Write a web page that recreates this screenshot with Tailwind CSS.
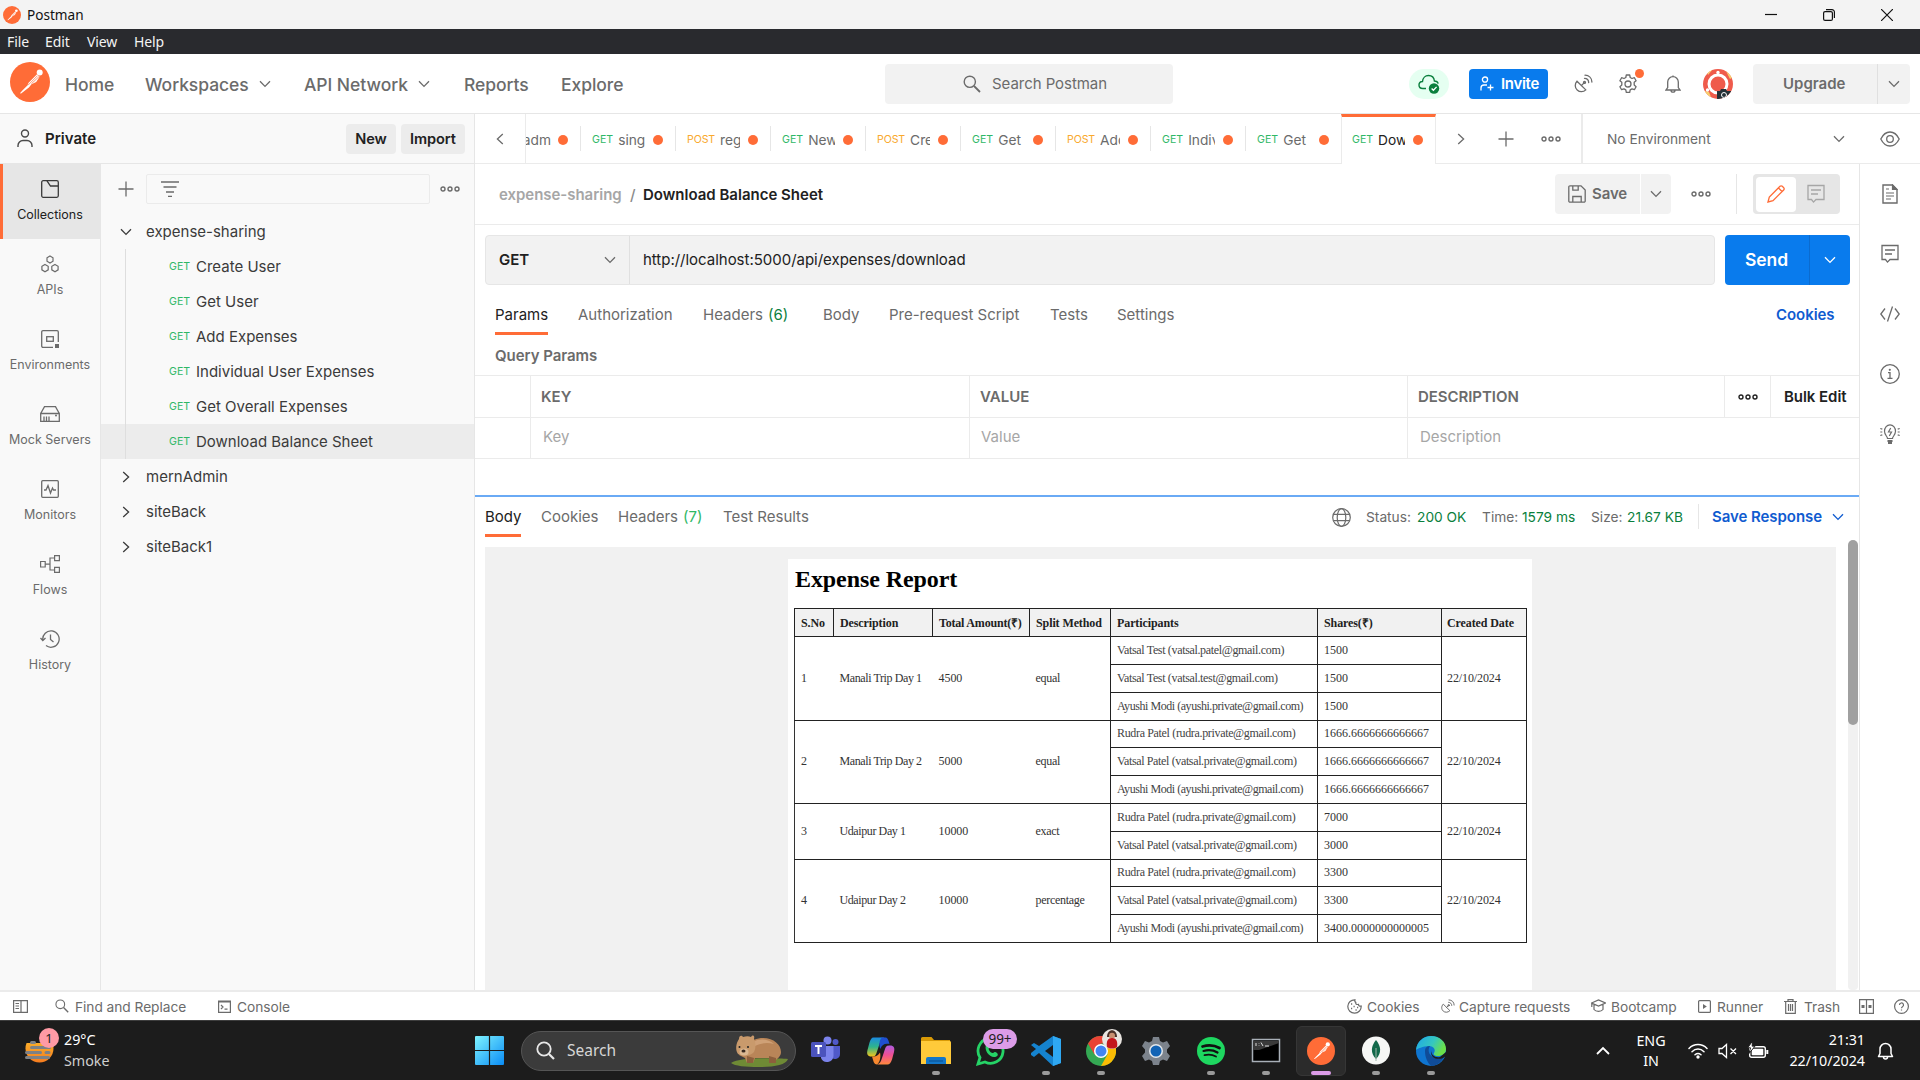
<!DOCTYPE html>
<html lang="en">
<head>
<meta charset="utf-8">
<title>Postman</title>
<script src="https://cdn.jsdelivr.net/npm/@tailwindcss/browser@4"></script>
</head>
<body class="w-[1920px] h-[1080px] overflow-hidden bg-white font-['Inter',sans-serif] text-[15px] leading-5 text-[#6b6b6b] whitespace-nowrap flex flex-col">

<!-- shared icons -->
<svg class="hidden">
  <symbol id="down" viewBox="0 0 12 8"><path d="M1 1.2 6 6.4 11 1.2" fill="none" stroke="currentColor" stroke-width="1.3"/></symbol>
  <symbol id="right" viewBox="0 0 8 12"><path d="M1.2 1 6.6 6 1.2 11" fill="none" stroke="currentColor" stroke-width="1.3"/></symbol>
  <symbol id="dots" viewBox="0 0 20 6"><g fill="none" stroke="currentColor" stroke-width="1.4"><circle cx="3" cy="3" r="2"/><circle cx="10" cy="3" r="2"/><circle cx="17" cy="3" r="2"/></g></symbol>
  <symbol id="plus" viewBox="0 0 16 16"><path d="M8 .5v15M.5 8h15" fill="none" stroke="currentColor" stroke-width="1.3"/></symbol>
  <symbol id="pm" viewBox="0 0 40 40"><circle cx="20" cy="20" r="20" fill="#ff6c37"/><circle cx="29.7" cy="10.6" r="3" fill="#fff"/><path d="M27 12.2 18.6 20.8l-1.2 2.6-4.3 4.3-3.2 3.6 1.2.1 7.8-6 2.6-3.1 4.7-2.4 3.4-5.2z" fill="#fff"/><path d="M27.6 13.6 18 23.2M29 14.6l-7.6 7.2" stroke="#ff6c37" stroke-width=".7"/></symbol>
  <symbol id="sat" viewBox="0 0 20 20"><g fill="none" stroke="currentColor" stroke-width="1.3" stroke-linecap="round"><path d="M4 7.2c-2.4 2.5-2.3 6.5.2 8.8 2.5 2.300 6.200 2.200 8.600-.1zM8.600 11.400l2.600-2.600"/><circle cx="11.500" cy="8.400" r="1"/><path d="M11.500 4.400c2.400.1 4.100 1.800 4.200 4.200M12 1.200c4 .1 6.800 2.900 6.900 6.900"/></g></symbol>
  <symbol id="note" viewBox="0 0 18 20"><g fill="none" stroke="currentColor" stroke-width="1.3"><path d="M1 1.500h16v14H9l-2.500 2.600L4.500 15.500H1z"/><path d="M4 6h10M4 10h7"/></g></symbol>
  <symbol id="find" viewBox="0 0 18 18"><g fill="none" stroke="currentColor"><circle cx="6.800" cy="6.800" r="5.600" stroke-width="1.400"/><path d="m11 11 6 6" stroke-width="1.800"/></g></symbol>
</svg>

<!-- window title -->
<div class="h-[29px] shrink-0 bg-[#f3f3f3] flex items-center pl-[3px] text-[#111] font-['Noto_Sans',sans-serif] text-[13.6px]">
  <svg class="size-[18px] mr-[6px]"><use href="#pm"/></svg>Postman
  <div class="ml-auto flex items-center gap-[46px] pr-[27px]">
    <svg class="w-3 h-3" viewBox="0 0 12 12"><path d="M0 5.500h12" stroke="#111" stroke-width="1.200"/></svg>
    <svg class="w-3 h-3" viewBox="0 0 12 12"><g fill="none" stroke="#111" stroke-width="1.200"><rect x=".6" y="2.600" width="8.800" height="8.800" rx="1.500"/><path d="M3 .7h6a2.400 2.400 0 0 1 2.400 2.400v6"/></g></svg>
    <svg class="w-3 h-3" viewBox="0 0 12 12"><path d="m0 0 12 12M12 0 0 12" stroke="#111" stroke-width="1.200"/></svg>
  </div>
</div>
<div class="h-[25px] shrink-0 bg-[#292a2e] text-[#f3f3f3] font-['Noto_Sans',sans-serif] text-[14px] tracking-[-0.1px] flex items-center pl-[7px]">
  <span class="w-[38px]">File</span><span class="w-[42px]">Edit</span><span class="w-[47px]">View</span><span>Help</span>
</div>

<!-- top navigation -->
<header class="h-[60px] shrink-0 border-b border-[#e6e6e6] flex items-center text-[17.5px] font-medium tracking-[-0.05px]">
  <svg class="size-10 ml-[10px] mr-[15px] mb-1"><use href="#pm"/></svg>
  <span class="w-[80px] pt-[2px]">Home</span>
  <span class="w-[114px] pt-[2px]">Workspaces</span><svg class="w-3 h-2 mr-[33px]"><use href="#down"/></svg>
  <span class="w-[114px] pt-[2px]">API Network</span><svg class="w-3 h-2 mr-[34px]"><use href="#down"/></svg>
  <span class="w-[97px] pt-[2px]">Reports</span>
  <span class="w-[324px] pt-[2px]">Explore</span>
  <div class="w-[288px] h-10 rounded bg-[#f2f2f2] flex items-center pl-[78px] gap-[11px] text-[15px] font-normal"><svg class="size-[18px]"><use href="#find"/></svg><span class="pt-px">Search Postman</span></div>
  <div class="ml-[236px] w-10 h-[30px] rounded-full bg-[#e5fff1] flex items-center justify-center">
    <svg class="w-[22px] h-5" viewBox="0 0 22 20"><path d="M8 14.500H4.800C2.500 14.500 1 13 1 11s1.500-3.400 3.500-3.500C4.800 4 7.300 1.500 10.500 1.500c3.300 0 5.600 2.300 5.900 5.500 1.800.1 3.300 1.100 3.800 2.600" fill="none" stroke="#0a7f3d" stroke-width="1.400"/><circle cx="16" cy="14.500" r="5.200" fill="#0a7f3d"/><path d="m13.600 14.500 1.800 1.800 3.200-3.400" fill="none" stroke="#fff" stroke-width="1.300"/></svg>
  </div>
  <div class="ml-5 w-[79px] h-[30px] rounded bg-[#097bed] text-white flex items-center pl-[11px] gap-[7px] text-[15px] font-semibold tracking-[-0.3px]">
    <svg class="w-[14px] h-4" viewBox="0 0 14 16"><g fill="none" stroke="#fff" stroke-width="1.300"><circle cx="5" cy="3.600" r="2.600"/><path d="M1 14.500V12a3 3 0 0 1 3-3h3M10.500 8.500v6M7.500 11.500h6"/></g></svg>Invite</div>
  <svg class="w-5 h-5 ml-[25px]"><use href="#sat"/></svg>
  <div class="relative ml-[25px]">
    <svg class="size-5" viewBox="0 0 20 20"><g fill="none" stroke="currentColor" stroke-width="1.300" stroke-linejoin="round"><path d="M8.300 1h3.400l.5 2.500 1.800 1 2.400-.8 1.700 3-1.900 1.600v2.800l1.900 1.600-1.700 3-2.400-.8-1.800 1-.5 2.500H8.300l-.5-2.500-1.800-1-2.400.8-1.700-3 1.900-1.600V8.300L1.900 6.700l1.700-3 2.400.8 1.800-1z"/><circle cx="10" cy="10" r="3"/></g></svg>
    <i class="absolute left-[17px] -top-[5px] size-[9px] rounded-full bg-[#ff6c37]"></i>
  </div>
  <svg class="w-4 h-5 ml-[27px]" viewBox="0 0 16 20"><g fill="none" stroke="currentColor" stroke-width="1.300"><path d="M8 1.500v1M1 16h14l-1.700-2.500V8a5.300 5.300 0 0 0-10.600 0v5.500zM6 16.200a2 2 0 0 0 4 0"/></g></svg>
  <svg class="size-[30px] ml-[22px]" viewBox="0 0 30 30"><defs><clipPath id="av"><circle cx="15" cy="15" r="15"/></clipPath></defs><g clip-path="url(#av)"><path fill="#ef5b4c" d="M0 0h30v30H0z"/><path d="M4 3 8 0h2L5 6zM22 0h4l4 8-3 2zM2 22l4 1 2 5-6-2z" fill="#f7cf6b"/><circle cx="15" cy="15" r="9" fill="none" stroke="#fff" stroke-width="3"/><circle cx="15" cy="3.500" r="1.700" fill="#fff"/><circle cx="4.500" cy="21" r="1.700" fill="#fff"/><path d="M14 22h3l1-2h5l1 2h4v10H14z" fill="#263238"/><circle cx="21" cy="26" r="2.500" fill="none" stroke="#fff"/></g></svg>
  <div class="ml-5 w-[157px] h-10 rounded bg-[#f2f2f2] flex text-[15px] font-semibold tracking-normal"><span class="w-[125px] border-r border-[#e0e0e0] leading-10 pl-[30px]">Upgrade</span><span class="flex-1 flex items-center justify-center"><svg class="w-3 h-2"><use href="#down"/></svg></span></div>
</header>

<!-- workspace bar with request tabs -->
<div class="h-[50px] shrink-0 flex">
  <div class="w-[475px] bg-[#f9f9f9] border-r border-b border-[#e6e6e6] flex items-center text-[#212121] font-semibold">
    <svg class="w-4 h-[19px] ml-[17px] mr-3" viewBox="0 0 16 19"><g fill="none" stroke="#4a4a4a" stroke-width="1.400"><circle cx="8" cy="4.500" r="3.500"/><path d="M1 18v-1.500a5 5 0 0 1 5-5h4a5 5 0 0 1 5 5V18"/></g></svg>
    <span class="w-[301px]">Private</span>
    <span class="w-[50px] h-[30px] rounded bg-[#ececec] text-center leading-[30px] mr-[5px] text-[14.6px] tracking-[-0.1px]">New</span><span class="w-16 h-[30px] rounded bg-[#ececec] text-center leading-[30px] text-[14.6px] tracking-[-0.1px]">Import</span>
  </div>
  <div class="w-[51px] border-r border-b border-[#ebebeb] flex items-center justify-center"><svg class="w-2 h-3 rotate-180"><use href="#right"/></svg></div>
  <div class="w-[55px] border-b border-[#ebebeb] flex items-center"><div class="w-full h-[25px] border-r border-[#e6e6e6] flex items-center pt-[2px] text-[13.75px]"><span class="w-[25px] mr-[7px] overflow-hidden flex justify-end">adm</span><i class="size-[10px] rounded-full bg-[#ff6c37]"></i></div></div>
  <div id="tabs" class="flex w-[760px]"></div>
  <div class="w-[95px] border-x border-[#ebebeb] border-t-3 border-t-[#ff6c37] flex items-center pl-[10px] pb-px"><span class="text-[10.6px] text-[#2fb866] w-[26px]">GET</span><span class="text-[13.75px] text-[#212121] w-[27px] overflow-hidden">Down</span><i class="ml-[8px] size-[10px] rounded-full bg-[#ff6c37]"></i></div>
  <div class="w-[147px] border-b border-r-2 border-[#ebebeb] flex items-center pl-[21px]"><svg class="w-2 h-3 mr-[33px]"><use href="#right"/></svg><svg class="size-4 mr-[27px]"><use href="#plus"/></svg><svg class="w-5 h-[6px]"><use href="#dots"/></svg></div>
  <div class="flex-1 border-b border-[#ebebeb] flex items-center pl-[24px] text-[13.75px]"><span class="w-[226px]">No Environment</span><svg class="w-3 h-2 mr-[35px]"><use href="#down"/></svg>
    <svg class="w-5 h-4" viewBox="0 0 20 16"><g fill="none" stroke="currentColor" stroke-width="1.300"><path d="M.8 8C3 3.500 6.200 1 10 1s7 2.500 9.200 7c-2.200 4.500-5.400 7-9.200 7S3 12.500.8 8z"/><circle cx="10" cy="8" r="3.300"/></g></svg></div>
</div>

<main class="flex-1 min-h-0 flex">
  <!-- section rail -->
  <nav class="w-[101px] border-r border-[#e6e6e6] bg-[#f9f9f9] text-[12.5px] text-center leading-4">
    <div class="h-[75px] bg-[#e6e6e6] border-l-3 border-[#ff6c37] pr-[3px] pt-4 flex flex-col items-center text-[#212121]"><svg class="size-[18px] mb-[9px]" viewBox="0 0 18 18"><g fill="none" stroke="#3a3a3a" stroke-width="1.300"><rect x=".7" y=".7" width="16.600" height="16.600" rx="1.500"/><path d="M6 .8 9.500 6H17"/></g></svg>Collections</div>
    <div class="h-[75px] pt-4 flex flex-col items-center"><svg class="size-[18px] mb-[9px]" viewBox="0 0 18 18"><g fill="none" stroke="currentColor" stroke-width="1.200"><path d="m9 1 3 1.800v3.400L9 8 6 6.200V2.800zM4 9.500l3.200 1.800v3.500L4 16.800.9 14.800v-3.500zM14 9.500l3.100 1.800v3.500L14 16.800l-3.200-2v-3.500z"/></g></svg>APIs</div>
    <div class="h-[75px] pt-4 flex flex-col items-center"><svg class="size-[18px] mb-[9px]" viewBox="0 0 18 18"><g fill="none" stroke="currentColor" stroke-width="1.300"><path d="M12 17.300H2a1.300 1.300 0 0 1-1.300-1.300V2A1.300 1.300 0 0 1 2 .7h14A1.300 1.300 0 0 1 17.300 2v10"/><rect x="5.700" y="6.700" width="6.600" height="4.600"/></g><path d="M14 14h4v4h-4z" fill="currentColor"/></svg>Environments</div>
    <div class="h-[75px] pt-4 flex flex-col items-center"><svg class="w-5 h-[18px] mb-[9px]" viewBox="0 0 20 18"><g fill="none" stroke="currentColor" stroke-width="1.300"><path d="M.7 8.500v7.800h18.600V8.500zM.7 8.500 4.500 1.700h11l3.800 6.800M4 16v-4.500M6.500 16v-4.500M9 16v-4.500"/></g><circle cx="16" cy="10.500" r="1" fill="currentColor"/></svg>Mock Servers</div>
    <div class="h-[75px] pt-4 flex flex-col items-center"><svg class="size-[18px] mb-[9px]" viewBox="0 0 18 18"><g fill="none" stroke="currentColor" stroke-width="1.300"><rect x=".7" y=".7" width="16.600" height="16.600" rx="1"/><path d="M3 10h2l2-4.500L9.500 13l2-5 1 2H15"/></g></svg>Monitors</div>
    <div class="h-[75px] pt-4 flex flex-col items-center"><svg class="w-5 h-[18px] mb-[9px]" viewBox="0 0 20 18"><g fill="none" stroke="currentColor" stroke-width="1.200"><path d="M.6 6.500h4.600V12H.6zM14.600.6h4.800v5h-4.800zM14.600 12.400h4.800v5h-4.800zM5.200 9.200H10M14.600 3H10v12h4.600"/></g></svg>Flows</div>
    <div class="h-[75px] pt-4 flex flex-col items-center"><svg class="w-5 h-[18px] mb-[9px]" viewBox="0 0 20 18"><g fill="none" stroke="currentColor" stroke-width="1.300"><path d="M2.800 10A8.200 8.200 0 1 1 6 15.600M.5 8l2.300 2.600L5.500 8M10.500 4.500V9.500l3 2.500"/></g></svg>History</div>
  </nav>

  <!-- collections tree -->
  <aside class="w-[374px] border-r border-[#e6e6e6] bg-[#f9f9f9] text-[#3b3b3b]">
    <div class="h-[50px] flex items-center pl-[17px] text-[#6b6b6b]"><svg class="size-4 mr-[12px]"><use href="#plus"/></svg>
      <div class="w-[284px] h-[30px] border border-[#ebebeb] rounded-xs flex items-center pl-[14px]"><svg class="w-[18px] h-4" viewBox="0 0 18 16"><path d="M0 1h18M2.500 6h13M5 11h8M7 15.300h4" stroke="currentColor" stroke-width="1.300"/></svg></div>
      <svg class="w-5 h-[6px] ml-[10px]"><use href="#dots"/></svg></div>
    <div class="h-[35px] flex items-center pl-[19px] gap-[14px]"><svg class="w-3 h-2"><use href="#down"/></svg>expense-sharing</div>
    <div id="requests"></div>
    <div class="h-[35px] flex items-center pl-[21px] gap-[16px]"><svg class="w-2 h-3"><use href="#right"/></svg>mernAdmin</div>
    <div class="h-[35px] flex items-center pl-[21px] gap-[16px]"><svg class="w-2 h-3"><use href="#right"/></svg>siteBack</div>
    <div class="h-[35px] flex items-center pl-[21px] gap-[16px]"><svg class="w-2 h-3"><use href="#right"/></svg>siteBack1</div>
  </aside>

  <!-- request editor -->
  <section class="w-[1385px] border-r border-[#e6e6e6] flex flex-col">
    <div class="h-[61px] border-b border-[#ebebeb] flex items-center font-semibold pl-6 shrink-0">
      <span class="text-[#a6a6a6] w-[131px] pt-px tracking-[-0.04px]">expense-sharing</span><span class="w-[13px] pt-px text-[#8a8a8a] font-medium">/</span><span class="text-[#212121] pt-px">Download Balance Sheet</span>
      <div class="ml-auto h-10 w-[85px] rounded-l bg-[#f2f2f2] flex items-center pl-[13px] gap-[6px] tracking-[-0.1px]"><svg class="w-[18px] h-[18px]" viewBox="0 0 18 18"><g fill="none" stroke="currentColor" stroke-width="1.300"><path d="M.8 2A1.200 1.200 0 0 1 2 .8h11L17.200 5v11a1.200 1.200 0 0 1-1.200 1.200H2A1.200 1.200 0 0 1 .8 16zM4.800.8v4.400h5.400V.8M4.800 17v-5.500h8.400V17"/></g></svg>Save</div>
      <div class="ml-px h-10 w-[30px] rounded-r bg-[#f2f2f2] flex items-center justify-center"><svg class="w-3 h-2"><use href="#down"/></svg></div>
      <svg class="w-5 h-[6px] ml-5"><use href="#dots"/></svg>
      <div class="ml-[25px] mr-4 w-px h-10 bg-[#e6e6e6]"></div>
      <div class="w-[87px] h-10 rounded bg-[#e6e6e6] p-[3px] flex items-center mr-[19px]"><div class="w-10 h-[35px] rounded-sm bg-white flex items-center justify-center text-[#ff6c37]"><svg class="size-[18px]" viewBox="0 0 18 18"><path d="m1 17 1.300-5L13 1.300a1.600 1.600 0 0 1 2.300 0l1.400 1.400a1.600 1.600 0 0 1 0 2.300L6 15.700zM11.500 3l3.500 3.500" fill="none" stroke="currentColor" stroke-width="1.300"/></svg></div><svg class="w-[18px] h-5 ml-[11px] text-[#a6a6a6]"><use href="#note"/></svg></div>
    </div>
    <div class="flex pl-[10px] pt-[10px] shrink-0">
      <div class="w-[1230px] h-[50px] rounded border border-[#e6e6e6] bg-[#f2f2f2] flex items-center text-[#212121]"><span class="w-[144px] h-full border-r border-[#e0e0e0] flex items-center pl-[13px] font-semibold">GET<svg class="w-3 h-2 ml-auto mr-[13px] text-[#6b6b6b]"><use href="#down"/></svg></span><span class="pl-[13px] tracking-[-0.02px]">http://localhost:5000/api/expenses/download</span></div>
      <div class="ml-[10px] w-[125px] h-[50px] rounded bg-[#097bed] text-white flex text-[17.5px] font-semibold"><span class="w-[85px] border-r border-[#0a6bd0] leading-[50px] pl-[20px] tracking-[-0.1px]">Send</span><span class="flex-1 flex items-center justify-center"><svg class="w-3 h-2"><use href="#down"/></svg></span></div>
    </div>
    <div class="h-[50px] pt-[5px] pl-5 flex items-start shrink-0">
      <span class="w-[53px] text-[#212121] h-[45px] border-b-3 border-[#ff6c37] mr-[30px] leading-[50px]">Params</span>
      <div class="h-[45px] leading-[50px] flex"><span class="w-[125px]">Authorization</span><span class="w-[65px]">Headers</span><span class="w-[55px] text-[#0a7f3d]">(6)</span><span class="w-[66px]">Body</span><span class="w-[161px]">Pre-request Script</span><span class="w-[67px]">Tests</span><span class="w-[659px]">Settings</span><span class="text-[#0f5bd0] font-semibold tracking-[-0.05px]">Cookies</span></div>
    </div>
    <div class="h-10 shrink-0 pl-5 leading-[41px] font-semibold tracking-[-0.05px]">Query Params</div>
    <div class="grid grid-cols-[56px_439px_438px_317px_46px_1fr] grid-rows-[42px_41px] border-y border-[#ebebeb] leading-[42px] h-[84px] shrink-0">
      <div class="border-r border-b border-[#ebebeb]"></div>
      <div class="border-r border-b border-[#ebebeb] pl-[10px] font-semibold">KEY</div>
      <div class="border-r border-b border-[#ebebeb] pl-[10px] font-semibold">VALUE</div>
      <div class="border-r border-b border-[#ebebeb] pl-[10px] font-semibold tracking-[-0.05px]">DESCRIPTION</div>
      <div class="border-r border-b border-[#ebebeb] flex items-center justify-center text-[#212121]"><svg class="w-5 h-[6px]"><use href="#dots"/></svg></div>
      <div class="border-b border-[#ebebeb] pl-[13px] font-semibold text-[#212121] tracking-[-0.05px]">Bulk Edit</div>
      <div class="border-r border-[#ebebeb]"></div>
      <div class="border-r border-[#ebebeb] pl-3 leading-[38px] text-[#a6a6a6]">Key</div>
      <div class="border-r border-[#ebebeb] pl-[11px] leading-[38px] text-[#a6a6a6]">Value</div>
      <div class="pl-3 leading-[38px] text-[#a6a6a6]">Description</div>
    </div>
    <div class="h-[36px] shrink-0"></div>
    <div class="h-[2px] bg-[#6aaaf5] shrink-0"></div>
    <div class="h-[50px] shrink-0 pl-[10px] flex items-start leading-10">
      <span class="w-9 h-10 border-b-3 border-[#ff6c37] text-[#212121] mr-[20px]">Body</span><span class="w-[77px]">Cookies</span><span class="w-[65px]">Headers</span><span class="w-10 text-[#2fb866]">(7)</span><span class="w-[609px]">Test Results</span>
      <svg class="size-[19px] mt-[11px] mr-[15px]" viewBox="0 0 19 19"><g fill="none" stroke="currentColor" stroke-width="1.200"><circle cx="9.500" cy="9.500" r="8.800"/><ellipse cx="9.500" cy="9.500" rx="4.300" ry="8.800"/><path d="M1.500 6.300h16M1.500 12.700h16"/></g></svg>
      <div class="flex text-[13.75px] text-[#0a7f3d]"><span class="w-[51px] text-[#6b6b6b]">Status:</span><span class="w-[65px]">200 OK</span><span class="w-[40px] text-[#6b6b6b]">Time:</span><span class="w-[69px]">1579 ms</span><span class="w-[36px] text-[#6b6b6b]">Size:</span><span class="w-[71px]">21.67 KB</span></div>
      <div class="w-px h-[25px] mt-[7px] mr-[13px] bg-[#e6e6e6]"></div>
      <span class="w-[120px] text-[#0f5bd0] font-semibold tracking-[-0.06px]">Save Response</span><svg class="w-3 h-2 mt-4 text-[#0f5bd0]"><use href="#down"/></svg>
    </div>
    <div class="flex-1 min-h-0 flex pl-[10px]">
      <div class="w-[1351px] bg-[#f1f1f1] flex justify-center pt-3 pr-[1px]">
        <!-- rendered report -->
        <article class="w-[744px] bg-white pl-[6px] text-black font-['Liberation_Serif',serif]">
          <h1 class="text-[24px] leading-[27px] font-bold pt-[7px] mb-[15px] pl-px tracking-[-0.08px]">Expense Report</h1>
          <table class="w-[733px] table-fixed border-collapse border border-[#333] text-left text-[12px] leading-4 text-[#333] tracking-[-0.1px]">
            <colgroup><col class="w-[39px]"><col class="w-[99px]"><col class="w-[97px]"><col class="w-[81px]"><col class="w-[207px]"><col class="w-[124px]"><col class="w-[85px]"></colgroup>
            <thead><tr class="h-7 bg-[#f1f1f1] text-[#222]"><th class="border border-[#222] pl-[6px] p-0">S.No</th><th class="border border-[#222] pl-[6px] p-0">Description</th><th class="border border-[#222] pl-[6px] p-0 tracking-[-0.2px]">Total Amount(₹)</th><th class="border border-[#222] pl-[6px] p-0">Split Method</th><th class="border border-[#222] pl-[6px] p-0">Participants</th><th class="border border-[#222] pl-[6px] p-0">Shares(₹)</th><th class="border border-[#222] pl-[5px] p-0">Created Date</th></tr></thead>
            <tbody id="rows"></tbody>
          </table>
        </article>
      </div>
      <div class="relative ml-3 w-[10px] rounded-b bg-[#f1f1f1]"><div class="absolute left-0 -top-[7px] w-[10px] h-[185px] rounded-full bg-[#a0a0a0]"></div></div>
    </div>
  </section>

  <!-- context bar -->
  <nav class="flex-1 flex flex-col items-center pt-[20px] gap-10">
    <svg class="w-4 h-5" viewBox="0 0 16 20"><path d="M1 1h9.500L15 5.500V19H1z" fill="none" stroke="currentColor" stroke-width="1.400"/><path d="M10.500 1v4.500H15zM4 5h3M4 9h8M4 12h8M4 15h5" fill="currentColor" stroke="currentColor" stroke-width="1.200"/></svg>
    <svg class="w-[18px] h-5"><use href="#note"/></svg>
    <svg class="w-5 h-5" viewBox="0 0 20 20"><path d="M5 4.500.8 10 5 15.500M15 4.500l4.200 5.500-4.200 5.500M12.500 2.500l-5 15" fill="none" stroke="currentColor" stroke-width="1.300"/></svg>
    <svg class="w-5 h-5" viewBox="0 0 20 20"><g fill="none" stroke="currentColor" stroke-width="1.300"><circle cx="10" cy="10" r="9.300"/><path d="M8 8.700h2v5.300M7.500 14.300h5"/></g><circle cx="9.800" cy="5.800" r="1.100" fill="currentColor"/></svg>
    <svg class="w-5 h-5" viewBox="0 0 20 20"><g fill="none" stroke="currentColor" stroke-width="1.200"><path d="M7.500 14.500c0-2-3-3.500-3-7.200C4.500 3.500 7 .8 10 .8s5.500 2.700 5.500 6.500c0 3.700-3 5.200-3 7.200zM.3 4.500l2 .6M.3 8h2M.3 11.500l2-.6M19.700 4.500l-2 .6M19.700 8h-2M19.700 11.500l-2-.6M10.700 4 8.500 8h3l-2.200 4"/><path d="M7.500 17h5M8 19h4" stroke-width="1.800"/></g></svg>
  </nav>
</main>

<!-- status bar -->
<footer class="h-[30px] shrink-0 border-t-2 border-[#ebebeb] flex items-center text-[13.75px] pl-[13px] tracking-[-0.05px]">
  <svg class="w-[15px] h-[13px] mr-[27px]" viewBox="0 0 15 13"><path d="M.6.6h13.800v11.800H.6zM8 .6v11.800M2.500 3.500h3.500M2.500 6h3.500M2.500 8.500h3.500" fill="none" stroke="currentColor" stroke-width="1.200"/></svg>
  <svg class="size-[14px] mr-[6px]"><use href="#find" /></svg><span class="w-[143px] pt-[2px]">Find and Replace</span>
  <svg class="size-[13px] mr-[6px]" viewBox="0 0 13 13"><path d="M.6 1h11.800v11.400H.6zM.6 2h11.800M3 5l2 2-2 2M6.500 9.200h3" fill="none" stroke="currentColor" stroke-width="1.200"/></svg><span class="w-[1110px] pt-[2px]">Console</span>
  <svg class="size-[15px] mr-[5px]" viewBox="0 0 15 15"><path d="M8 .8A6.700 6.700 0 1 0 14.200 7c-1.500.5-2.700-.2-2.700-1.600C9.500 5.800 8.500 5 8.800 3.400 7.800 3 7.600 2 8 .8z" fill="none" stroke="currentColor" stroke-width="1.200"/><path d="M4 5h1.200M6.500 7.500h1.200M4 9.500h1.200M8.500 11h1.200M10 8.500h1.200" stroke="currentColor" stroke-width="1.300"/></svg><span class="w-[73px] pt-[2px]">Cookies</span>
  <svg class="size-[15px] mr-[4px]"><use href="#sat"/></svg><span class="w-[132px] pt-[2px]">Capture requests</span>
  <svg class="w-[15px] h-[14px] mr-[5px]" viewBox="0 0 15 14"><path d="M.6 4 7.500 1l6.900 3-6.900 3zM3 5.500v5c2 2.500 7 2.500 9 0v-5M.8 4v4" fill="none" stroke="currentColor" stroke-width="1.200"/></svg><span class="w-[87px] pt-[2px]">Bootcamp</span>
  <svg class="size-[13px] mr-[6px]" viewBox="0 0 13 13"><rect x=".6" y=".6" width="11.800" height="11.800" rx="1" fill="none" stroke="currentColor" stroke-width="1.200"/><path d="M5 4v5l3.800-2.500z" fill="currentColor"/></svg><span class="w-[67px] pt-[2px]">Runner</span>
  <svg class="w-[13px] h-[15px] mr-[7px]" viewBox="0 0 13 15"><path d="M0 2.500h13M4 2.500V.7h5v1.800M1.700 2.500v11.800h9.600V2.500M4.500 5v7M6.500 5v7M8.500 5v7" fill="none" stroke="currentColor" stroke-width="1.200"/></svg><span class="w-[55px] pt-[2px]">Trash</span>
  <svg class="w-[15px] h-[15px] mr-[20px]" viewBox="0 0 15 15"><path d="M.6.600h13.800v13.800H.6zM7.500.6v13.800" fill="none" stroke="currentColor" stroke-width="1.200"/><path d="M2.500 6h3v3h-3zM9.500 6h3v3h-3z" fill="currentColor"/></svg>
  <svg class="w-[15px] h-[15px]" viewBox="0 0 15 15"><circle cx="7.500" cy="7.500" r="6.900" fill="none" stroke="currentColor" stroke-width="1.200"/><path d="M5.500 6a2 2 0 1 1 3 1.700c-.7.400-1 .700-1 1.500M7.500 10.400v1.200" fill="none" stroke="currentColor" stroke-width="1.200"/></svg>
</footer>

<!-- windows taskbar -->
<div class="h-[60px] shrink-0 bg-[#1c1c1c] border-t border-[#3d3d3d] flex items-center text-white font-['Noto_Sans',sans-serif] text-[14.3px] leading-5">
  <div class="relative w-[30px] h-[30px] ml-[25px]">
    <svg class="size-[30px]" viewBox="0 0 30 30"><defs><linearGradient id="sun" x2="0" y2="1"><stop stop-color="#fbc02d"/><stop offset="1" stop-color="#f57c1f"/></linearGradient></defs><circle cx="14.500" cy="12.500" r="14" fill="url(#sun)"/><path d="M0 0h30v7H0z" fill="#1c1c1c"/><g stroke="#7d8186" stroke-width="3" stroke-linecap="round"><path d="M6.500 6.500h3M6.500 11.500h18M1.500 16.500h14M21 16.500h3M1.500 21.500h22"/></g></svg>
    <span class="absolute left-[14px] -top-2 size-5 rounded-full bg-[#ff9aa5] text-[#222] text-[13px] text-center">1</span>
  </div>
  <div class="ml-[9px] w-[411px] leading-[20.500px]">29°C<br><span class="text-[#cfcfcf]">Smoke</span></div>
  <svg class="size-[29px]" viewBox="0 0 29 29"><defs><linearGradient id="wn" x2="1" y2="1"><stop stop-color="#7ef3ff"/><stop offset="1" stop-color="#0a8cf5"/></linearGradient></defs><path d="M0 1a1 1 0 0 1 1-1h12.900v13.900H0zM15.100 0H28a1 1 0 0 1 1 1v12.900H15.100zM0 15.100h13.900V29H1a1 1 0 0 1-1-1zM15.100 15.100H29V28a1 1 0 0 1-1 1H15.100z" fill="url(#wn)"/></svg>
  <div class="ml-[17px] w-[275px] h-10 rounded-full bg-[#3b3b3b] border border-[#555] flex items-center pl-[14px] text-[#d6d6d6] text-[15.5px]"><svg class="size-[19px] mr-3" viewBox="0 0 19 19"><g fill="none" stroke="#e8e8e8"><circle cx="8" cy="8" r="6.700" stroke-width="1.800"/><path d="m13 13 5 5" stroke-width="2.200"/></g></svg><span class="-mt-px">Search</span>
    <svg class="w-[58px] h-[34px] ml-auto mr-[6px]" viewBox="0 0 58 34"><path d="M0 29c8-6 45-5 57-4-2 6-14 8-29 8C14 33 4 32 0 29z" fill="#6f8a35"/><path d="M16 12c4-6 10-8 16-8 11 0 18 7 18 14 0 4-3 6-5 8v3h-7v-5H24l-2 5h-6l-2-5-6-3z" fill="#b98558"/><path d="M22 8c6-4 16-3 21 2-7-2-13-1-19 2z" fill="#cfa076"/><path d="M38 22v7h7v-5zM16 22v7h6l1-5z" fill="#8d5f3c"/><path d="M8 5c0-4 3-4 4-2 3-1 6-1 8 0 2-3 4-1 3 2 2 4 2 9 0 13-3 4-11 5-16 2-3-4-2-11 1-15z" fill="#c99a6c"/><ellipse cx="13" cy="18" rx="4.500" ry="3.500" fill="#dbb892"/><ellipse cx="12.500" cy="17" rx="2" ry="1.500" fill="#3b2a20"/><circle cx="8.500" cy="13" r="1" fill="#222"/><circle cx="17" cy="13" r="1" fill="#222"/></svg></div>
  <div id="apps" class="ml-[2px] flex h-full"></div>
  <svg class="w-[14px] h-[9px] ml-[138px]" viewBox="0 0 14 9"><path d="M1 8 7 2l6 6" fill="none" stroke="#fff" stroke-width="1.800"/></svg>
  <div class="w-[60px] ml-[11px] text-center">ENG<br>IN</div>
  <svg class="w-5 h-[17px] ml-[7px]" viewBox="0 0 20 17"><g fill="none" stroke="#fff" stroke-width="1.500" stroke-linecap="round"><path d="M1 6.500c5-5.300 13-5.300 18 0M4 9.700c3.500-3.500 8.500-3.500 12 0M7 12.700c2-1.700 4-1.700 6 0"/></g><circle cx="10" cy="15" r="1.700" fill="#fff"/></svg>
  <svg class="w-5 h-4 ml-[10px]" viewBox="0 0 20 16"><path d="M1 5.500h3L8.500 1.500v13L4 10.500H1zM12.500 5.500l5.500 5.500M18 5.500 12.500 11" fill="none" stroke="#fff" stroke-width="1.300"/></svg>
  <svg class="w-[22px] h-5 ml-[9px]" viewBox="0 0 22 20"><rect x="2.700" y="5.700" width="15.600" height="10.600" rx="2" fill="none" stroke="#fff" stroke-width="1.400"/><rect x="4.700" y="7.700" width="11.600" height="6.600" rx=".8" fill="#fff"/><path d="M20.300 9v4" stroke="#fff" stroke-width="2"/><path d="M5.500 0 .7 6.800H3.500L2 12.500 8 5.200H5.200z" fill="#fff" stroke="#1c1c1c" stroke-width="1"/></svg>
  <div class="w-[96px] text-right leading-[20.500px] tracking-[-0.05px]">21:31<br>22/10/2024</div>
  <svg class="w-[17px] h-[20px] ml-[12px]" viewBox="0 0 17 20"><path d="M1.500 15.500h14l-1.500-3V8a5.500 5.500 0 0 0-11 0v4.500zM6.500 16a2 2 0 0 0 4 0" fill="none" stroke="#fff" stroke-width="1.500" stroke-linejoin="round"/></svg>
</div>

<script>
const byId = id => document.getElementById(id);

// open request tabs
byId('tabs').innerHTML = [['GET','singl'],['POST','regis'],['GET','New'],['POST','Crea'],['GET','Get'],['POST','Add'],['GET','Indivi'],['GET','Get']].map(([m, n], i, a) =>
  `<div class="w-[95px] border-b border-[#ebebeb] flex items-center"><div class="w-full h-[25px] ${i < a.length - 1 ? 'border-r border-[#e6e6e6]' : ''} flex items-center pt-[2px] pl-[11px] text-[13.75px]"><span class="text-[10.6px] mr-[5px] ${m === 'GET' ? 'text-[#2fb866]' : 'text-[#f9a92d] tracking-[-0.1px]'}">${m}</span><span class="flex-1 min-w-0 overflow-hidden">${n}</span><i class="ml-2 mr-[12px] size-[10px] rounded-full bg-[#ff6c37] shrink-0"></i></div></div>`).join('');

// requests of the expanded collection
byId('requests').innerHTML = ['Create User','Get User','Add Expenses','Individual User Expenses','Get Overall Expenses','Download Balance Sheet'].map((n, i) =>
  `<div class="h-[35px] flex items-center pl-6 ${i === 5 ? 'bg-[#ececec]' : ''}"><i class="w-px h-full bg-[#dedede] mr-[43px]"></i><span class="text-[10.6px] text-[#2fb866] w-[27px] pt-px">GET</span><span>${n}</span></div>`).join('');

// expense rows: [title, total, method, [[participant, share, tracking, row height]]]
const VT = 'tracking-[-0.34px]', RP = 'tracking-[-0.34px]', VP = 'tracking-[-0.36px]', AM = 'tracking-[-0.45px]';
const data = [
  ['Manali Trip Day 1', '4500', 'equal', [['Vatsal Test (vatsal.patel@gmail.com)', '1500', VT, 'h-7'], ['Vatsal Test (vatsal.test@gmail.com)', '1500', VT, 'h-7'], ['Ayushi Modi (ayushi.private@gmail.com)', '1500', AM, 'h-7']]],
  ['Manali Trip Day 2', '5000', 'equal', [['Rudra Patel (rudra.private@gmail.com)', '1666.6666666666667', RP, 'h-[27px]'], ['Vatsal Patel (vatsal.private@gmail.com)', '1666.6666666666667', VP, 'h-7'], ['Ayushi Modi (ayushi.private@gmail.com)', '1666.6666666666667', AM, 'h-7']]],
  ['Udaipur Day 1', '10000', 'exact', [['Rudra Patel (rudra.private@gmail.com)', '7000', RP, 'h-7'], ['Vatsal Patel (vatsal.private@gmail.com)', '3000', VP, 'h-7']]],
  ['Udaipur Day 2', '10000', 'percentage', [['Rudra Patel (rudra.private@gmail.com)', '3300', RP, 'h-[27px]'], ['Vatsal Patel (vatsal.private@gmail.com)', '3300', VP, 'h-7'], ['Ayushi Modi (ayushi.private@gmail.com)', '3400.0000000000005', AM, 'h-7']]],
];
byId('rows').innerHTML = data.map(([d, t, m, ps], i) => ps.map(([p, s, tr, h], j) => {
  const side = (v, track) => `<td rowspan="${ps.length}" class="border-y border-[#222] p-0 pb-[2px] pl-[6px] ${track}">${v}</td>`;
  return `<tr class="${h}">${j ? '' : side(i + 1, '') + side(d, 'tracking-[-0.4px]') + side(t, 'tracking-[-0.05px]') + side(m, 'tracking-[-0.3px]')}<td class="border border-[#222] p-0 pb-[2px] pl-[6px] text-[#444] ${tr}">${p}</td><td class="border border-[#222] p-0 pb-[2px] pl-[6px] tracking-normal">${s}</td>${j ? '' : `<td rowspan="${ps.length}" class="border border-[#222] p-0 pb-[2px] pl-[5px]">22/10/2024</td>`}</tr>`;
}).join('')).join('');

// pinned taskbar apps: [icon, running, active, badge]
const S = (b) => `<svg class="size-[30px]" viewBox="0 0 30 30">${b}</svg>`;
const apps = [
  [S('<circle cx="16.500" cy="4.500" r="4" fill="#7b83eb"/><circle cx="24.500" cy="6" r="3" fill="#5059c9"/><path d="M20 10h9v8a5 5 0 0 1-9 3z" fill="#5059c9"/><path d="M10 10h12.500v10a6.500 6.500 0 0 1-12.500 2z" fill="#7b83eb"/><rect y="6" width="15" height="15" rx="1.500" fill="#4b53bc"/><path d="M4 10h7M7.500 10v8" stroke="#fff" stroke-width="2"/>')],
  [S('<defs><linearGradient id="ca" x2="0" y2="1"><stop stop-color="#1b8be0"/><stop offset=".5" stop-color="#2fb58a"/><stop offset="1" stop-color="#f5c518"/></linearGradient><linearGradient id="cb" x2="0" y2="1"><stop stop-color="#b05ce0"/><stop offset=".5" stop-color="#ef4f93"/><stop offset="1" stop-color="#ff8a3c"/></linearGradient></defs><path d="M7.500 1.500h11c-3 1-4 3-5 6.500l-3 9c-1 3-2 3.500-5 3.500-4 0-5-2.500-4-6.500l2-7.500c1-3 2-5 4-5z" fill="url(#ca)"/><path d="M21.500 28.500H11c3-1 4-3 5-6.500l3-9c1-3 2-3.500 5-3.500 4 0 5 2.500 4 6.500l-2 7.500c-1 3-2.500 5-4.500 5z" fill="url(#cb)"/><path d="M13 1.500h6.500c2 0 3 2.500 4 6.500-5-1-8 1-9 5-2-4-1-9 1-11z" fill="#1f4fd0"/><path d="M6 20.500c4 .5 6-1 8-4 1 4 0 10-3 12-3 0-3.500-3-5-8z" fill="#f7882f"/>')],
  [S('<path d="M0 2.500A1.500 1.500 0 0 1 1.500 1h9L13 4h16v8H0z" fill="#d99a06"/><path d="M0 5h28.500c.8 0 1.500.5 1.500 1.500V28H0z" fill="#ffca3a"/><path d="M5 28v-5a2 2 0 0 1 2-2h16a2 2 0 0 1 2 2v5z" fill="#1377c9"/><path d="M8 25h14" stroke="#0a4f8d"/>'), 1],
  [S('<path d="m2 28 2-6.500A12.500 12.500 0 1 1 9 26z" fill="none" stroke="#25d366" stroke-width="2.800"/><path d="M10 9c1-1 2-1 3 1s-1 2 0 4 3 3.500 4 3 2-2 4 0 0 4-3 4c-5 0-10-7-8-12z" fill="#25d366"/>'), 0, 0, 1],
  [S('<path d="m22 0 8 3v24l-8 3L8 17l-5 4-3-2v-2l5-4-5-4 3-2 5 3z" fill="#1583cf"/><path d="m22 0 8 3v24l-8 3z" fill="#2fa8f2"/><path d="M22 9v12l-8-6z" fill="#1c1c1c"/>'), 1],
  [S('<circle cx="15" cy="15" r="15" fill="#34a853"/><path d="M2 7.500A15 15 0 0 1 28 7.500H15l-6.500 11z" fill="#ea4335"/><path d="M28 7.500A15 15 0 0 1 15 30l6.500-11.500L21 7.500z" fill="#fbbc04"/><circle cx="15" cy="15" r="7" fill="#fff"/><circle cx="15" cy="15" r="5.500" fill="#4285f4"/>') + '<svg class="absolute left-[29px] top-[8px] size-5" viewBox="0 0 20 20"><circle cx="10" cy="10" r="10" fill="#e8e4e0"/><path d="M5 8c0-9 10-9 10 0z" fill="#4a3028"/><circle cx="10" cy="6.800" r="3" fill="#c98f70"/><path d="M5 18c-1-6 1-9 5-9s6 3 5 9c-3 2-7 2-10 0z" fill="#c4161c"/></svg>', 1],
  [S('<path d="M12 1h6l1 4 3 1.500 4-1.500 3 5-3 3.500v3l3 3.500-3 5-4-1.500-3 1.500-1 4h-6l-1-4-3-1.500L4 25l-3-5 3-3.500v-3L1 10l3-5 4 1.500L11 5z" fill="#7c838c"/><circle cx="15" cy="15" r="7" fill="#e4e8ec"/><circle cx="15" cy="15" r="5.500" fill="#1263b5"/>')],
  [S('<circle cx="15" cy="15" r="14" fill="#1ed760"/><g fill="none" stroke="#111" stroke-linecap="round"><path d="M6.500 10.500c6-1.700 12-1.200 17 1.500" stroke-width="2.700"/><path d="M7.500 15c5-1.400 10-.8 14 1.500" stroke-width="2.200"/><path d="M8.500 19.200c4-1 8-.6 11.500 1.300" stroke-width="1.800"/></g>'), 1],
  [S('<rect x="1.500" y="3.500" width="27" height="22" fill="#000" stroke="#a9b0b8" stroke-width="1.500"/><path d="M2 5h26v2L8 14H2z" fill="#3a3a3a"/><path d="M5 7v3M8 7.500v.500M8 9.500v.5M10 6.500l2 3.500M14 10h4" stroke="#ddd"/>'), 1],
  ['<svg class="size-[28px]"><use href="#pm"/></svg>', 1, 1],
  [S('<circle cx="15" cy="14.500" r="14" fill="#f6f7f5"/><path d="M15 4c5 6 6 13 0 19-6-6-5-13 0-19z" fill="#12694a"/><path d="M15 12v13" stroke="#9fb8a8"/>'), 1],
  [S('<defs><linearGradient id="ed" x2="1" y2=".4"><stop stop-color="#1ea7e8"/><stop offset=".6" stop-color="#35c7c0"/><stop offset="1" stop-color="#6be04a"/></linearGradient></defs><circle cx="15" cy="15" r="15" fill="#0f75d0"/><path d="M0 14C1 5 8 0 15 0c9 0 15 6 15 13 0 5-4 7-8 7-4 0-5-2-4-3 2-3 0-7-5-7-6 0-12 3-13 4z" fill="url(#ed)"/><path d="M9 15c0-4 3-5 5-5-3 4-1 11 6 12 4 .5 6-.5 8-1-3 6-8 9-13 9-3-3-6-8-6-15z" fill="#104c98"/><path d="M15 14c0 5 4 8 9 7l6-5v4l-3 2c-5 2-13 1-12-8z" fill="#1c1c1c"/>'), 1],
];
byId('apps').innerHTML = apps.map(([svg, run, act, badge]) =>
  `<div class="relative w-[55px] h-full flex items-center justify-center"><div class="size-[50px] flex items-center justify-center rounded-md ${act ? 'bg-[#2b2b2b] border border-[#363636]' : ''}">${svg}</div>${run ? `<i class="absolute h-1 rounded-full bottom-[5px] ${act ? 'w-5 left-[18px] bg-[#dc9ce8]' : 'w-2 left-[24px] bg-[#9a9a9a]'}"></i>` : ''}${badge ? '<span class="absolute left-[20px] top-[8px] w-[34px] h-5 rounded-full bg-[#dc9ce8] text-[#222] text-[13.500px] leading-5 text-center">99+</span>' : ''}</div>`).join('');
</script>
</body>
</html>
